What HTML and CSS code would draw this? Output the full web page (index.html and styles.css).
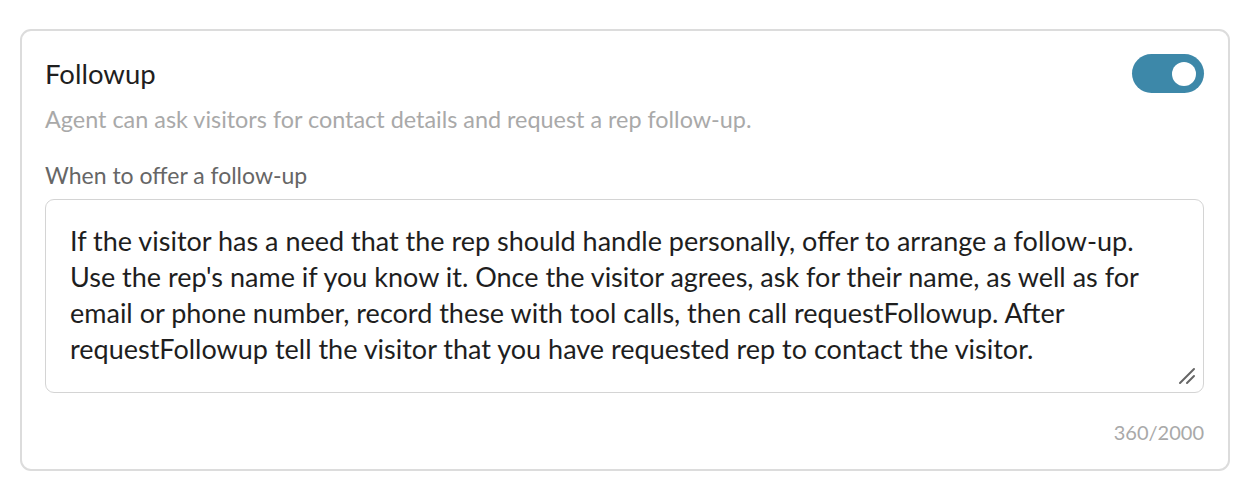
FILE: index.html
```html
<!DOCTYPE html>
<html lang="en">
<head>
<meta charset="utf-8">
<title>Followup</title>
<link rel="stylesheet" href="styles.css">
</head>
<body>
<section class="card">
  <div class="head">
    <h2 class="title">Followup</h2>
    <div class="toggle" role="switch" aria-checked="true"><span class="knob"></span></div>
  </div>
  <p class="desc">Agent can ask visitors for contact details and request a rep follow-up.</p>
  <label class="label">When to offer a follow-up</label>
  <div class="textarea">
    <div class="text">If the visitor has a need that the rep should handle personally, offer to arrange a follow-up.<br>Use the rep's name if you know it. Once the visitor agrees, ask for their name, as well as for<br>email or phone number, record these with tool calls, then call requestFollowup. After<br>requestFollowup tell the visitor that you have requested rep to contact the visitor.</div>
    <svg class="grip" width="20" height="20" viewBox="0 0 20 20"><path d="M3 17 L17 3 M10 17 L17 10" stroke="#666" stroke-width="2" stroke-linecap="round" fill="none"/></svg>
  </div>
  <div class="counter">360/2000</div>
</section>
</body>
</html>
```
FILE: styles.css
```css
* { box-sizing: border-box; }
html, body { margin: 0; padding: 0; background: #fff; }
body {
  font-family: "Lato", "Open Sans", sans-serif;
  color: #222;
  padding: 29px 22px 0 20px;
}
.card {
  width: 1210px;
  height: 442px;
  border: 2px solid #dcdcdc;
  border-radius: 11px;
  padding: 23px 24px 0 23px;
  display: flex;
  flex-direction: column;
}
.head {
  display: flex;
  align-items: center;
  justify-content: space-between;
  height: 39px;
}
.title {
  margin: 0;
  font-size: 27.5px;
  font-weight: 400;
  color: #1f1f1f;
  line-height: 39px;
}
.toggle {
  width: 72px;
  height: 39px;
  border-radius: 20px;
  background: #3d88a9;
  display: flex;
  align-items: center;
  justify-content: flex-end;
  padding-right: 8px;
}
.knob {
  width: 24px;
  height: 24px;
  border-radius: 50%;
  background: #fff;
}
.desc {
  margin: 12px 0 0 0;
  font-size: 23.4px;
  line-height: 28px;
  color: #a9a9a9;
}
.label {
  display: block;
  margin: 28px 0 0 0;
  font-size: 23px;
  line-height: 28px;
  color: #666;
}
.textarea {
  position: relative;
  margin-top: 10px;
  height: 194px;
  border: 1.5px solid #d4d4d4;
  border-radius: 9px;
  padding: 23px 20px 0 24px;
}
.text {
  font-size: 27px;
  line-height: 36px;
  color: #1e1e1e;
  white-space: nowrap;
}
.grip {
  position: absolute;
  right: 6px;
  bottom: 6px;
}
.counter {
  margin-top: 27px;
  text-align: right;
  font-size: 20px;
  line-height: 24px;
  color: #a9a9a9;
}
```
